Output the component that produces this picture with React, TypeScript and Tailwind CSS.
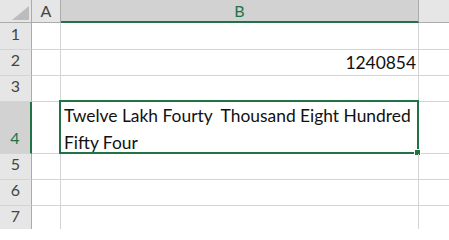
const font = { fontFamily: "Lato, 'Liberation Sans', sans-serif" };

const rows = [
  { n: "1", h: "h-[27px]" },
  { n: "2", h: "h-[26px]", value: "1240854" },
  { n: "3", h: "h-[26px]" },
  { n: "4", h: "h-[52px]", selected: true },
  { n: "5", h: "h-[26px]" },
  { n: "6", h: "h-[26px]" },
  { n: "7", h: "h-[26px]" },
];

function RowHeader({ n, h, selected }: { n: string; h: string; selected?: boolean }) {
  return (
    <div
      className={`${h} flex items-end justify-center pb-[3px] border-b border-[#d4d4d4] text-[16px] ${
        selected
          ? "bg-[#d2d2d2] text-[#217346] border-r-2 border-r-[#217346]"
          : "bg-[#e6e6e6] text-[#444444] border-r border-r-[#ababab]"
      }`}
    >
      {n}
    </div>
  );
}

export default function App() {
  return (
    <div className="w-[449px] h-[229px] overflow-hidden bg-white text-[#111]" style={font}>
      <div className="grid grid-cols-[32px_29px_358px_1fr]">
        {/* header row */}
        <div className="h-[23px] bg-[#e6e6e6] border-r border-b border-[#ababab] relative">
          <div className="absolute left-[12px] top-[6px] w-0 h-0 border-l-[17px] border-l-transparent border-b-[14px] border-b-[#bcbcbc]" />
        </div>
        <div className="h-[23px] bg-[#e6e6e6] border-r border-b border-[#ababab] flex items-center justify-center text-[16px] text-[#444444]">
          A
        </div>
        <div className="h-[23px] bg-[#d2d2d2] border-r border-r-[#ababab] border-b-2 border-b-[#217346] flex items-center justify-center text-[16px] text-[#217346]">
          B
        </div>
        <div className="h-[23px] bg-[#e6e6e6] border-b border-[#ababab]" />

        {rows.map((r) => (
          <div key={r.n} className="contents">
            <RowHeader n={r.n} h={r.h} selected={r.selected} />
            <div className={`${r.h} border-r border-b border-[#d4d4d4]`} />
            <div className={`${r.h} border-r border-b border-[#d4d4d4] relative text-[17.4px]`}>
              {r.value && (
                <div className="absolute right-[2px] bottom-[4px] leading-none">{r.value}</div>
              )}
              {r.selected && (
                <div className="absolute left-[-2px] top-[-2px] right-[-1px] bottom-[-1px] border-2 border-[#217346] px-[3px] pt-0 leading-[27px] whitespace-pre-wrap">
                  {"Twelve Lakh Fourty  Thousand Eight Hundred\nFifty Four"}
                  <div className="absolute right-[-4px] bottom-[-4px] w-[7px] h-[7px] bg-[#217346] border border-white" />
                </div>
              )}
            </div>
            <div className={`${r.h} border-b border-[#d4d4d4]`} />
          </div>
        ))}
      </div>
    </div>
  );
}
